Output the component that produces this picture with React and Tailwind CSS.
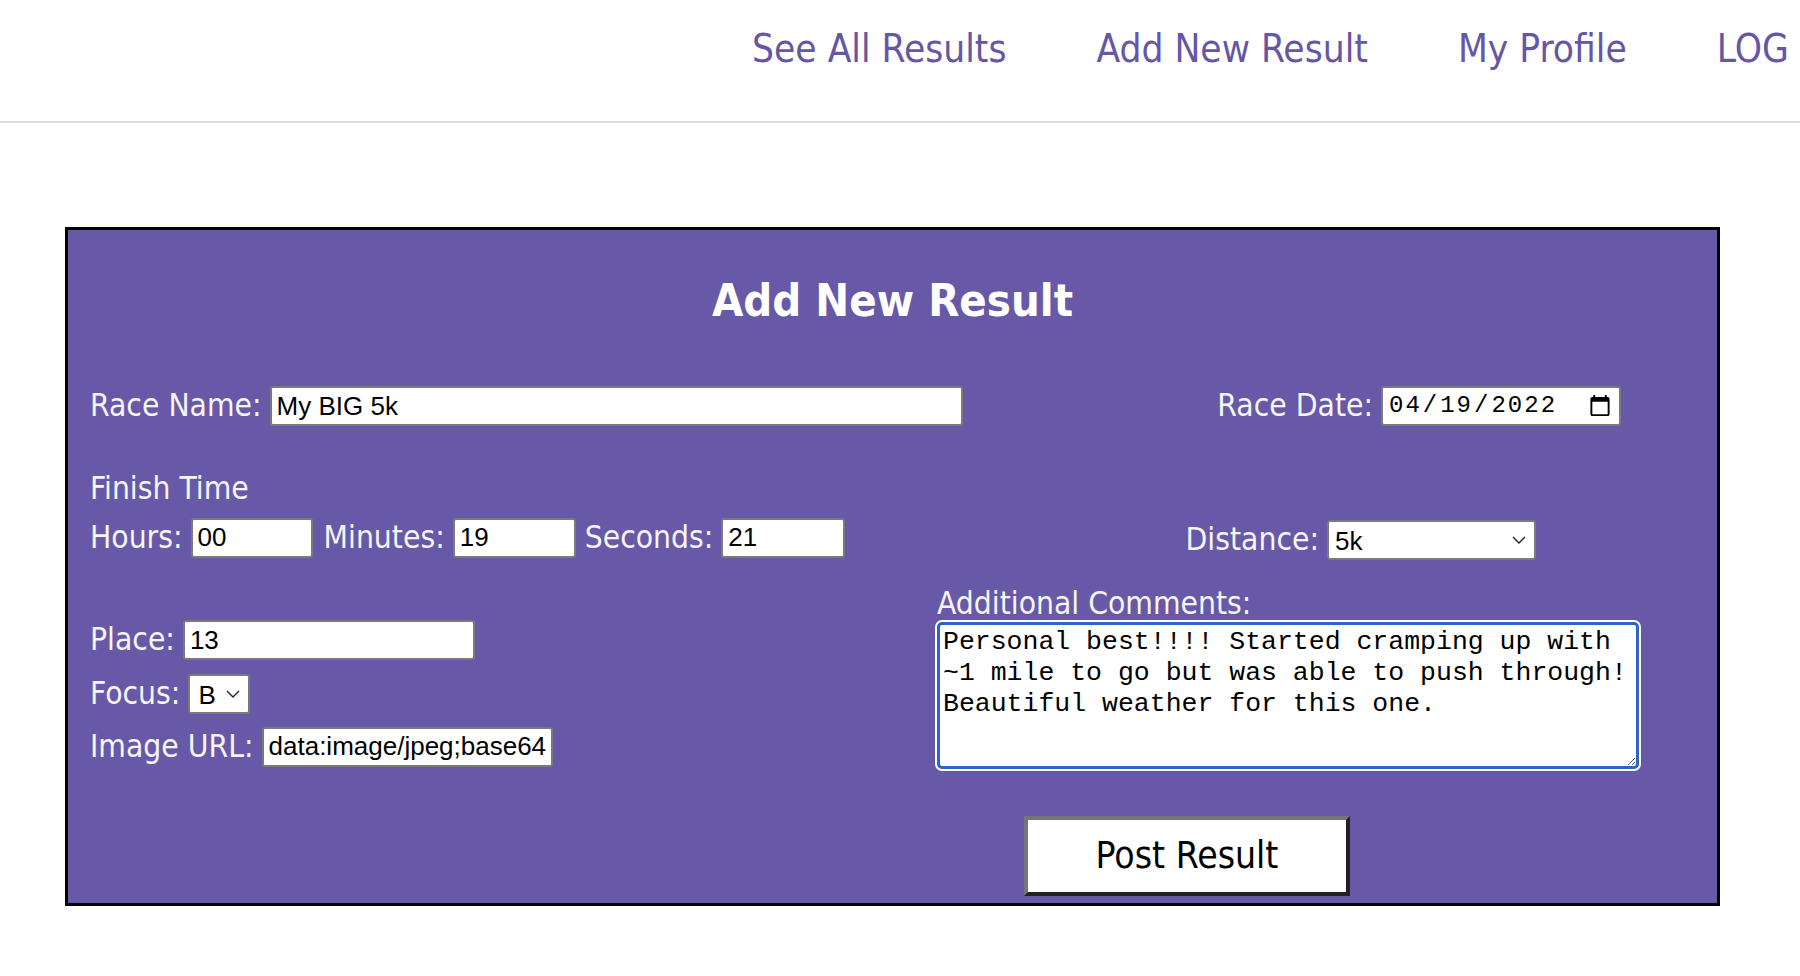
import { useState } from 'react'

const labelFont = { fontFamily: '"Liberation Sans Narrow", "DejaVu Sans Condensed", "Roboto", sans-serif' }

const inputBase =
  'bg-white border-2 border-[#7a7a7a] rounded-[3px] h-[40px] px-[5px] text-black outline-none'
const sansText = 'text-[26px] font-["Liberation_Sans",Arial,sans-serif]'

const Chevron = () => (
  <svg
    className="absolute right-[10px] top-1/2 -translate-y-1/2 pointer-events-none"
    width="14"
    height="8"
    viewBox="0 0 14 8"
    fill="none"
    stroke="#222"
    strokeWidth="1.4"
  >
    <path d="M1 1l6 6 6-6" />
  </svg>
)

const App = () => {
  const [comments, setComments] = useState(
    'Personal best!!!! Started cramping up with ~1 mile to go but was able to push through! Beautiful weather for this one.'
  )

  return (
    <div className="w-full min-h-[976px] bg-white overflow-hidden" style={labelFont}>
      {/* Header */}
      <header className="h-[123px] border-b-2 border-[#dddddd] flex items-center pb-[24px] pl-[752px] gap-[90px] whitespace-nowrap text-[38.5px] text-[#6656a6]">
        <a href="#">See All Results</a>
        <a href="#">Add New Result</a>
        <a href="#">My Profile</a>
        <a href="#">LOG OUT</a>
      </header>

      {/* Form card */}
      <div className="mt-[104px] ml-[65px] w-[1655px] h-[679px] border-[3px] border-black bg-[#6759a7] text-[#f5f5f5] px-[22px] text-[31.5px]">
        <h2 className="text-center font-bold text-[45px] leading-none text-white mt-[48px]">Add New Result</h2>

        {/* Race name + date */}
        <div className="flex items-center h-[40px] mt-[63px]">
          <label className="flex items-center">
            Race Name:
            <input className={`${inputBase} ${sansText} ml-[8px] w-[693px]`} defaultValue="My BIG 5k" />
          </label>
          <label className="flex items-center ml-auto mr-[74px]">
            Race Date:
            <input
              type="date"
              className={`${inputBase} ml-[8px] w-[240px] text-[24px] tracking-[2px] font-['Liberation_Mono',monospace]`}
              defaultValue="2022-04-19"
            />
          </label>
        </div>

        {/* Finish time + distance */}
        <div className="flex items-end mt-[47px]">
          <div>
            <div className="leading-none">Finish Time</div>
            <div className="flex items-center h-[40px] mt-[13px]">
              <span>Hours:</span>
              <input className={`${inputBase} ${sansText} ml-[8px] w-[122px]`} defaultValue="00" />
              <span className="ml-[11px]">Minutes:</span>
              <input className={`${inputBase} ${sansText} ml-[8px] w-[123px]`} defaultValue="19" />
              <span className="ml-[9px]">Seconds:</span>
              <input className={`${inputBase} ${sansText} ml-[8px] w-[124px]`} defaultValue="21" />
            </div>
          </div>
          <label className="flex items-center ml-auto mr-[159px] -mb-[6px]">
            Distance:
            <span className="relative ml-[8px]">
              <select className={`${inputBase} ${sansText} appearance-none w-[209px] h-[37px] pl-[6px]`} defaultValue="5k">
                <option>5k</option>
                <option>10k</option>
                <option>Half Marathon</option>
                <option>Marathon</option>
              </select>
              <Chevron />
            </span>
          </label>
        </div>

        {/* Place / focus / image + comments */}
        <div className="flex mt-[30px]">
          <div className="w-[847px] pt-[33px] flex flex-col">
            <label className="flex items-center h-[39px]">
              Place:
              <input className={`${inputBase} ${sansText} ml-[8px] w-[292px] h-[39px]`} defaultValue="13" />
            </label>
            <label className="flex items-center h-[36px] mt-[16px]">
              Focus:
              <span className="relative ml-[8px]">
                <select className={`${inputBase} ${sansText} appearance-none w-[62px] h-[36px] pl-[8px]`} defaultValue="B">
                  <option>A</option>
                  <option>B</option>
                  <option>C</option>
                </select>
                <Chevron />
              </span>
            </label>
            <label className="flex items-center h-[40px] mt-[15px]">
              Image URL:
              <input
                className={`${inputBase} ${sansText} ml-[8px] w-[291px]`}
                defaultValue="data:image/jpeg;base64,/9j/4AAQSkZJRgABAQAAAQABAAD"
              />
            </label>
          </div>
          <div className="flex flex-col">
            <div className="leading-none">Additional Comments:</div>
            <textarea
              className="mt-[3px] w-[702px] h-[147px] bg-white text-black border-[3px] border-[#2f62cc] rounded-[5px] shadow-[0_0_0_2px_#ffffff] px-[3px] py-[2px] text-[26.5px] leading-[31px] font-['Liberation_Mono',monospace] outline-none"
              value={comments}
              onChange={(e) => setComments(e.target.value)}
            />
            <button className="mt-[47px] ml-[87px] w-[326px] h-[80px] bg-white text-black text-[37px] border-4 border-t-[#767676] border-l-[#767676] border-b-[#222222] border-r-[#222222]">
              Post Result
            </button>
          </div>
        </div>
      </div>
    </div>
  )
}

export default App
